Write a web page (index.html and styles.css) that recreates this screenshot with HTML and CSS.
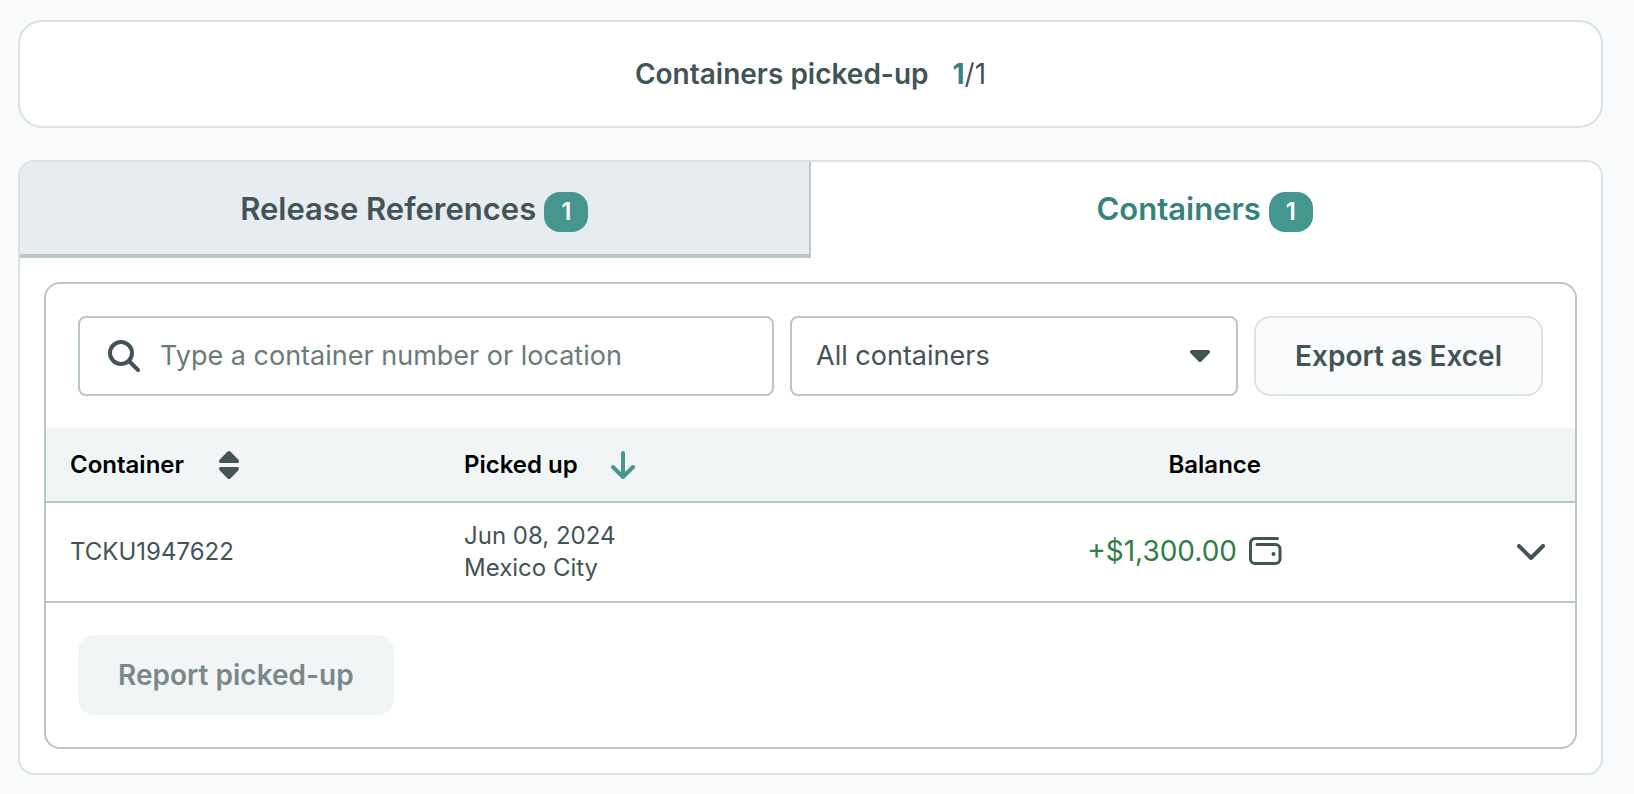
FILE: index.html
```html
<!DOCTYPE html>
<html lang="en">
<head>
  <meta charset="UTF-8">
  <meta name="viewport" content="width=device-width, initial-scale=1">
  <title>Containers</title>
  <link rel="stylesheet" href="styles.css">
</head>
<body>

  <section class="summary">
    <span class="summary-label">Containers picked-up</span>
    <span><strong class="summary-done">1</strong>/1</span>
  </section>

  <main class="card">
    <div class="tabs" role="tablist">
      <button type="button" class="tab" role="tab" aria-selected="false">Release References <span class="badge">1</span></button>
      <button type="button" class="tab active" role="tab" aria-selected="true">Containers <span class="badge">1</span></button>
    </div>

    <div class="panel">
      <div class="toolbar">
        <label class="search">
          <svg width="32" height="32" viewBox="0 0 32 32" fill="none" stroke="currentColor" stroke-width="4" stroke-linecap="round" aria-hidden="true">
            <circle cx="13" cy="13" r="11"/>
            <path d="M21.5 21.5 30 30"/>
          </svg>
          <input type="text" placeholder="Type a container number or location" aria-label="Search containers">
        </label>

        <div class="filter">
          <select aria-label="Filter containers">
            <option>All containers</option>
          </select>
          <svg width="20" height="12" viewBox="0 0 20 12" fill="currentColor" aria-hidden="true">
            <path d="M1.6 0h16.8q1.6 0 1.6 1.6 0 1.2-.8 2l-7.8 7.8q-1.4 1.2-2.8 0L.8 3.6Q0 2.8 0 1.6 0 0 1.6 0z"/>
          </svg>
        </div>

        <button type="button" class="btn btn-outline">Export as Excel</button>
      </div>

      <table class="containers">
        <thead>
          <tr>
            <th class="col-container">
              <button type="button" class="sort">Container
                <svg width="24" height="28" viewBox="0 0 24 28" fill="currentColor" aria-hidden="true">
                  <path d="M3.6 12h16.800q1.600 0 1.600-1.600 0-1.200-.8-2L13.400.6Q12-.6 10.600.6L2.800 8.400Q2 9.200 2 10.400 2 12 3.600 12z"/>
                  <path d="M3.600 16h16.800q1.600 0 1.600 1.600 0 1.200-.8 2l-7.800 7.800q-1.400 1.200-2.800 0L2.800 19.600Q2 18.800 2 17.600 2 16 3.600 16z"/>
                </svg>
              </button>
            </th>
            <th>
              <button type="button" class="sort sorted">Picked up
                <svg width="24" height="28" viewBox="0 0 24 28" fill="none" stroke="currentColor" stroke-width="4" stroke-linecap="round" stroke-linejoin="round" aria-hidden="true">
                  <path d="M12 2v23M2 16l10 10 10-10"/>
                </svg>
              </button>
            </th>
            <th class="balance-head">Balance</th>
            <th class="col-toggle"></th>
          </tr>
        </thead>
        <tbody>
          <tr>
            <td>TCKU1947622</td>
            <td>Jun 08, 2024<br>Mexico City</td>
            <td class="balance-cell">
              <div class="balance">
                <span class="amount">+$1,300.00</span>
                <svg width="33" height="28" viewBox="0 0 33 28" fill="none" stroke="currentColor" stroke-width="3" stroke-linecap="round" stroke-linejoin="round" aria-hidden="true">
                  <path d="M28.5 1.5H6A4.5 4.5 0 0 0 1.5 6v16A4.5 4.5 0 0 0 6 26.500h20.500a4.500 4.500 0 0 0 4.500-4.500V12a4.500 4.500 0 0 0-4.500-4.500H8"/>
                  <circle cx="24.500" cy="17" r="2" fill="currentColor" stroke="none"/>
                </svg>
              </div>
            </td>
            <td class="toggle-cell">
              <button type="button" class="toggle" aria-label="Show details">
                <svg width="28" height="16" viewBox="0 0 28 16" fill="none" stroke="currentColor" stroke-width="4" stroke-linecap="round" stroke-linejoin="round" aria-hidden="true">
                  <path d="M2 2l12 12L26 2"/>
                </svg>
              </button>
            </td>
          </tr>
        </tbody>
      </table>

      <div class="actions">
        <button type="button" class="btn" disabled>Report picked-up</button>
      </div>
    </div>
  </main>

</body>
</html>
```

FILE: styles.css
```css
* {
  box-sizing: border-box;
}

body {
  margin: 0;
  padding: 20px 31px 20px 18px;
  background: #fafbfd;
  color: #435456;
  font-family: Inter, "Liberation Sans", sans-serif;
  font-size: 28px;
  line-height: 40px;
}

button, input, select {
  font: inherit;
  color: inherit;
}

button {
  cursor: pointer;
}

svg {
  display: block;
  flex-shrink: 0;
}

.summary {
  display: flex;
  justify-content: center;
  gap: 24px;
  padding: 32px;
  margin-bottom: 32px;
  background: white;
  border: 2px solid #dae2e6;
  border-radius: 24px;
}

.summary-label {
  font-weight: 600;
}

.summary-done {
  font-weight: 700;
  color: #37827b;
}

.card {
  background: white;
  border: 2px solid #dae2e6;
  border-radius: 16px;
}

/* tabs */

.tabs {
  display: grid;
  grid-template-columns: 1fr 1fr;
}

.tab {
  display: flex;
  justify-content: center;
  align-items: baseline;
  gap: 8px;
  min-height: 96px;
  padding: 27px 16px 20px;
  background: #e7ecf0;
  border: 0 solid #b9c6cc;
  border-width: 0 2px 4px 0;
  border-top-left-radius: 14px;
  font-size: 31px;
  font-weight: 600;
}

.tab.active {
  background: none;
  border-color: transparent;
  color: #37827b;
}

.badge {
  padding: 0 17px;
  border-radius: 16px;
  background: #45968f;
  color: white;
  font-size: 24px;
}

/* panel */

.panel {
  margin: 24px;
  border: 2px solid #b9c6cc;
  border-radius: 16px;
}

.toolbar {
  display: flex;
  gap: 16px;
  padding: 32px;
}

.search {
  display: flex;
  align-items: center;
  gap: 20px;
  flex: 1;
  min-width: 0;
  height: 80px;
  padding: 0 28px;
  border: 2px solid #b9c6cc;
  border-radius: 8px;
}

.search input {
  flex: 1;
  min-width: 0;
  padding: 0;
  border: none;
  outline: none;
  background: none;
  font-size: 27px;
}

.search input::placeholder {
  color: #6b7b7b;
  opacity: 1;
}

.filter {
  display: grid;
  align-items: center;
  width: 448px;
}

.filter select,
.filter svg {
  grid-area: 1 / 1;
}

.filter select {
  appearance: none;
  width: 100%;
  height: 80px;
  padding: 0 56px 0 24px;
  border: 2px solid #b9c6cc;
  border-radius: 8px;
  background: white;
  font-size: 27px;
}

.filter svg {
  justify-self: end;
  margin-right: 28px;
  pointer-events: none;
}

.btn {
  height: 80px;
  padding: 0 40px;
  border: none;
  border-radius: 16px;
  font-weight: 600;
  white-space: nowrap;
}

.btn-outline {
  padding: 0 39px;
  background: #fafbfd;
  border: 2px solid #dae2e6;
}

.btn:disabled {
  background: #f1f5f6;
  color: #7b8889;
  cursor: default;
}

/* table */

.containers {
  width: 100%;
  border-collapse: collapse;
  font-size: 24px;
  line-height: 32px;
}

.containers th,
.containers td {
  padding: 0 24px;
  border-bottom: 2px solid #b9c6cc;
  text-align: left;
}

.containers th {
  height: 74px;
  background: #f1f5f6;
  color: black;
  font-weight: 600;
}

.containers td {
  height: 100px;
}

.containers .col-container {
  width: 394px;
}

.containers .col-toggle {
  width: 290px;
}

.sort {
  display: flex;
  align-items: center;
  gap: 33px;
  padding: 0;
  border: none;
  background: none;
}

.sort svg {
  color: #435456;
}

.sort.sorted svg {
  color: #45968f;
}

.containers .balance-head {
  text-align: right;
}

.containers .balance-cell {
  padding: 0 3px 2px 24px;
}

.balance {
  display: flex;
  justify-content: flex-end;
  align-items: center;
  gap: 12px;
}

.amount {
  color: #317d48;
  font-size: 28px;
}

.toggle {
  display: block;
  margin-left: auto;
  padding: 6px;
  border: none;
  background: none;
}

.actions {
  padding: 32px;
}
```
